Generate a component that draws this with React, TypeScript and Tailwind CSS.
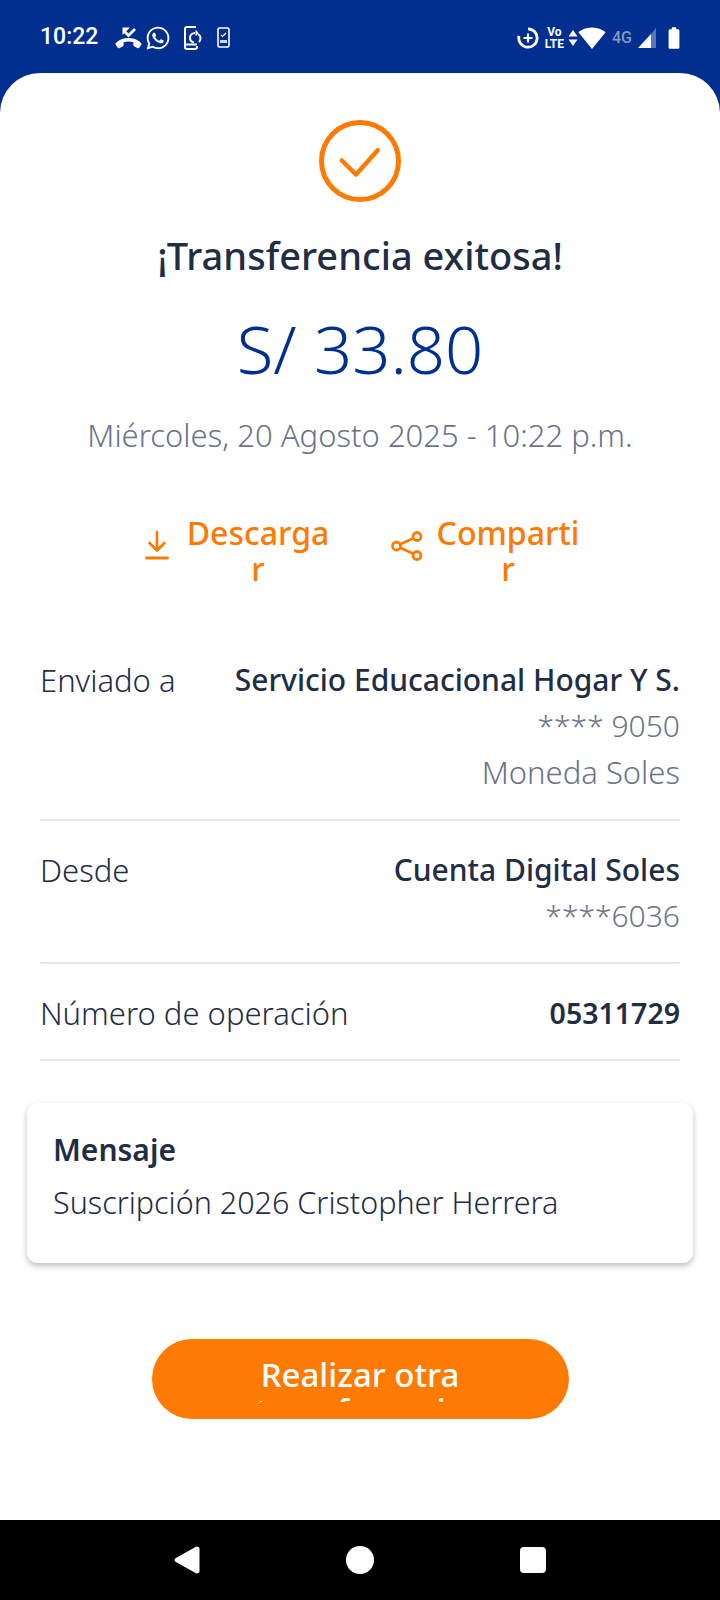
import React from "react";
import { FaWhatsapp } from "react-icons/fa";
import { MdBatteryFull, MdSignalWifi4Bar } from "react-icons/md";

const MissedCall = () => (
  <svg width="27" height="24" viewBox="0 0 27 24" fill="white">
    <path d="M13.500 12c-4.500 0-8.700 1.500-12.200 4.400-.8.700-1 1.700-.5 2.500l1.800 2.700c.5.800 1.500 1 2.300.5l3-1.900c.6-.4.900-1 .8-1.700l-.3-2c1.600-.6 3.300-.9 5.100-.9s3.500.3 5.100.9l-.3 2c-.1.700.2 1.300.8 1.700l3 1.900c.8.500 1.800.3 2.300-.5l1.800-2.700c.5-.8.300-1.800-.5-2.500C22.200 13.500 18 12 13.500 12z" />
    <path d="M20 3l-6.500 6.500L9.500 5.500" fill="none" stroke="white" strokeWidth="2.800" />
    <path d="M7.500 1.500h7.500l-7.500 7.500z" />
  </svg>
);

const PhoneSync = () => (
  <svg width="20" height="24" viewBox="0 0 20 24" fill="none" stroke="white" strokeWidth="2">
    <path d="M13 1H4a2 2 0 0 0-2 2v18a2 2 0 0 0 2 2h8a2 2 0 0 0 2-2v-1" />
    <path d="M2 18.500h12" />
    <path d="M15 8a5 5 0 0 1 1 8" />
    <path d="M11 16.500a5 5 0 0 1-4-5 5 5 0 0 1 5-4.500" />
    <path d="M13 4.500v5l2-2.500z" fill="white" strokeWidth="1" />
  </svg>
);

const PhoneCheck = () => (
  <svg width="13" height="21" viewBox="0 0 13 21" fill="none">
    <rect x="1" y="1" width="11" height="19" rx="1.500" stroke="white" strokeWidth="1.600" />
    <path d="M4 8l1.500 1.500L9 6" stroke="white" strokeWidth="1.200" />
    <path d="M3 13h7v3H3z" fill="white" opacity="0.8" />
  </svg>
);

const DataPlus = () => (
  <svg width="22" height="22" viewBox="0 0 22 22" fill="none">
    <path d="M11 1.800a9.200 9.200 0 1 1-9 7" stroke="white" strokeWidth="2.800" />
    <path d="M11 6.500v9M6.500 11h9" stroke="white" strokeWidth="2.200" />
  </svg>
);

const Arrows = () => (
  <svg width="10" height="18" viewBox="0 0 10 18" fill="white">
    <path d="M5 1l4.500 6.500h-9z" />
    <path d="M5 17l4.500-6.500h-9z" />
  </svg>
);

const Signal = () => (
  <svg width="18" height="20" viewBox="0 0 18 20">
    <path d="M0 20L13 6v14z" fill="white" />
    <path d="M13 6l5-6v20h-5z" fill="white" opacity="0.35" />
  </svg>
);

const Check = () => (
  <svg width="84" height="84" viewBox="0 0 84 84" fill="none" stroke="#ff7a00">
    <circle cx="42" cy="42" r="38.500" strokeWidth="5" />
    <path d="M23.700 41.500L38 55.500 59.700 31.200" strokeWidth="4.500" strokeLinecap="round" strokeLinejoin="round" />
  </svg>
);

const Download = () => (
  <svg width="24" height="32" viewBox="0 0 24 32" fill="none" stroke="#ff7a00" strokeWidth="2.600" strokeLinecap="round" strokeLinejoin="round">
    <path d="M12 3v18M4.500 14l7.500 7.500 7.500-7.500" />
    <path d="M1.500 29h21" strokeWidth="3" />
  </svg>
);

const Share = () => (
  <svg className="mt-[2px]" width="32" height="30" viewBox="0 0 32 30" fill="none" stroke="#ff7a00" strokeWidth="2.800">
    <circle cx="26" cy="5.500" r="4" />
    <circle cx="5.500" cy="15" r="4" />
    <circle cx="26" cy="24.500" r="4" />
    <path d="M9 13.300L22.500 7.200M9 16.700l13.500 6.100" />
  </svg>
);

const ActionLink = ({ label, icon, w, gap }: { label: string; icon: React.ReactNode; w: string; gap: string }) => (
  <button className={`flex items-start ${gap}`}>
    <span className="mt-[14px] flex">{icon}</span>
    <span className={`${w} break-all text-center text-[32px] leading-[36px] font-medium text-[#ff7a00]`}>{label}</span>
  </button>
);

export default function App() {
  return (
    <div
      className="flex h-[1600px] w-[720px] flex-col overflow-hidden bg-[#002f8f]"
      style={{ fontFamily: '"Noto Sans", sans-serif' }}
    >
      <div className="flex h-[73px] shrink-0 items-center justify-between pt-[2px] pr-[36px] pl-[40px]">
        <div className="flex items-center">
          <span className="mr-[17px] text-[23px] font-medium text-white" style={{ fontFamily: "Roboto, sans-serif" }}>10:22</span>
          <span className="mr-[3px] flex"><MissedCall /></span>
          <FaWhatsapp className="mr-[12px] text-[26px] text-white" />
          <span className="mr-[14px] flex"><PhoneSync /></span>
          <PhoneCheck />
        </div>
        <div className="flex items-center" style={{ fontFamily: "Roboto, sans-serif" }}>
          <span className="mr-[6px] flex"><DataPlus /></span>
          <span className="mr-[4px] text-center text-[12px] leading-[12px] font-bold text-white">Vo<br />LTE</span>
          <span className="flex"><Arrows /></span>
          <MdSignalWifi4Bar className="text-[28px] text-white" />
          <span className="mr-[6px] ml-[6px] text-[16px] font-medium text-[#8b97b8]">4G</span>
          <span className="mr-[8px] flex"><Signal /></span>
          <MdBatteryFull className="-mx-[3px] text-[26px] text-white" />
        </div>
      </div>

      <div className="flex min-h-0 flex-1 flex-col items-center rounded-t-[40px] bg-white pt-[46px]">
        <Check />
        <h1 className="mt-[27px] text-[38px] leading-[50px] font-medium text-[#1f2d45]">¡Transferencia exitosa!</h1>
        <p className="mt-[25px] text-[67px] leading-[86px] font-light text-[#002f8f]">S/ 33.80</p>
        <p className="mt-[22px] text-[31px] leading-[44px] font-light text-[#6b7488]">Miércoles, 20 Agosto 2025 - 10:22 p.m.</p>

        <div className="mt-[58px] ml-[6px] flex gap-[58px]">
          <ActionLink label="Descargar" icon={<Download />} w="w-[150px]" gap="gap-[14px]" />
          <ActionLink label="Compartir" icon={<Share />} w="w-[146px]" gap="gap-[12px]" />
        </div>

        <div className="mt-[70px] w-full px-[40px]">
          <div className="flex justify-between border-b-2 border-[#e3e6ea] pb-[24px]">
            <span className="text-[31px] leading-[46px] font-light text-[#1f2d45]">Enviado a</span>
            <div className="text-right text-[31px] leading-[46px] font-light text-[#6b7488]">
              <p className="text-[30px] font-medium text-[#1f2d45]">Servicio Educacional Hogar Y S.</p>
              <p className="text-[30px]">**** 9050</p>
              <p>Moneda Soles</p>
            </div>
          </div>
          <div className="flex justify-between border-b-2 border-[#e3e6ea] pt-[26px] pb-[23px]">
            <span className="text-[31px] leading-[46px] font-light text-[#1f2d45]">Desde</span>
            <div className="text-right text-[31px] leading-[46px] font-light text-[#6b7488]">
              <p className="text-[30px] font-medium text-[#1f2d45]">Cuenta Digital Soles</p>
              <p className="text-[30px]">****6036</p>
            </div>
          </div>
          <div className="flex justify-between border-b-2 border-[#e3e6ea] pt-[26px] pb-[23px]">
            <span className="text-[31px] leading-[46px] font-light text-[#1f2d45]">Número de operación</span>
            <span className="text-[28.500px] leading-[46px] font-semibold text-[#1f2d45]">05311729</span>
          </div>
        </div>

        <div className="mt-[42px] h-[160px] w-[666px] rounded-[10px] bg-white px-[26px] pt-[24px] shadow-[0_3px_6px_rgba(0,0,0,0.25)]">
          <p className="text-[30px] leading-[46px] font-semibold text-[#1f2d45]">Mensaje</p>
          <p className="mt-[6px] text-[30.500px] leading-[46px] font-light text-[#1f2d45]">Suscripción 2026 Cristopher Herrera</p>
        </div>

        <button className="mt-[76px] flex h-[80px] w-[417px] justify-center rounded-full bg-[#ff7a00] pt-[18px]">
          <span className="h-[45px] w-[230px] overflow-hidden text-center text-[33px] leading-[36px] font-medium text-white">Realizar otra transferencia</span>
        </button>
      </div>

      <div className="flex h-[80px] shrink-0 items-center bg-black pr-[174px] pl-[174px] pb-[1px]">
        <div className="flex w-full items-center justify-between">
          <svg width="26" height="28" viewBox="0 0 26 28" fill="white">
            <path d="M23 0.500a2.500 2.500 0 0 1 2.500 2.500v22a2.500 2.500 0 0 1-3.500 2.300L1.500 15.700a2 2 0 0 1 0-3.400L21.500 0.900a3 3 0 0 1 1.500-.4z" />
          </svg>
          <span className="h-[28px] w-[28px] rounded-full bg-white" />
          <span className="h-[26px] w-[26px] rounded-[4px] bg-white" />
        </div>
      </div>
    </div>
  );
}
